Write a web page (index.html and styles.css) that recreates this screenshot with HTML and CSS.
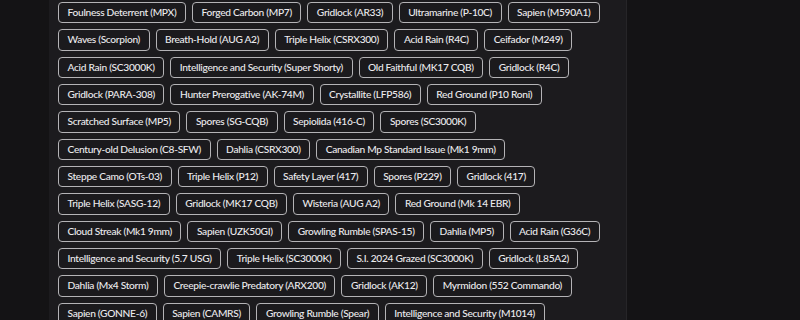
FILE: index.html
```html
<!DOCTYPE html>
<html lang="en">
<head>
  <meta charset="UTF-8" />
  <title>Camos</title>
  <link rel="stylesheet" href="styles.css">
</head>
<body>
<section class="side"></section>
<section class="panel">
  <div class="tags">
    <span class="tag">Foulness Deterrent (MPX)</span>
    <span class="tag">Forged Carbon (MP7)</span>
    <span class="tag">Gridlock (AR33)</span>
    <span class="tag">Ultramarine (P-10C)</span>
    <span class="tag">Sapien (M590A1)</span>
    <span class="tag">Waves (Scorpion)</span>
    <span class="tag">Breath-Hold (AUG A2)</span>
    <span class="tag">Triple Helix (CSRX300)</span>
    <span class="tag">Acid Rain (R4C)</span>
    <span class="tag">Ceifador (M249)</span>
    <span class="tag">Acid Rain (SC3000K)</span>
    <span class="tag">Intelligence and Security (Super Shorty)</span>
    <span class="tag">Old Faithful (MK17 CQB)</span>
    <span class="tag">Gridlock (R4C)</span>
    <span class="tag">Gridlock (PARA-308)</span>
    <span class="tag">Hunter Prerogative (AK-74M)</span>
    <span class="tag">Crystallite (LFP586)</span>
    <span class="tag">Red Ground (P10 Roni)</span>
    <span class="tag">Scratched Surface (MP5)</span>
    <span class="tag">Spores (SG-CQB)</span>
    <span class="tag">Sepiolida (416-C)</span>
    <span class="tag">Spores (SC3000K)</span>
    <span class="tag">Century-old Delusion (C8-SFW)</span>
    <span class="tag">Dahlia (CSRX300)</span>
    <span class="tag">Canadian Mp Standard Issue (Mk1 9mm)</span>
    <span class="tag">Steppe Camo (OTs-03)</span>
    <span class="tag">Triple Helix (P12)</span>
    <span class="tag">Safety Layer (417)</span>
    <span class="tag">Spores (P229)</span>
    <span class="tag">Gridlock (417)</span>
    <span class="tag">Triple Helix (SASG-12)</span>
    <span class="tag">Gridlock (MK17 CQB)</span>
    <span class="tag">Wisteria (AUG A2)</span>
    <span class="tag">Red Ground (Mk 14 EBR)</span>
    <span class="tag">Cloud Streak (Mk1 9mm)</span>
    <span class="tag">Sapien (UZK50GI)</span>
    <span class="tag">Growling Rumble (SPAS-15)</span>
    <span class="tag">Dahlia (MP5)</span>
    <span class="tag">Acid Rain (G36C)</span>
    <span class="tag">Intelligence and Security (5.7 USG)</span>
    <span class="tag">Triple Helix (SC3000K)</span>
    <span class="tag">S.I. 2024 Grazed (SC3000K)</span>
    <span class="tag">Gridlock (L85A2)</span>
    <span class="tag">Dahlia (Mx4 Storm)</span>
    <span class="tag">Creepie-crawlie Predatory (ARX200)</span>
    <span class="tag">Gridlock (AK12)</span>
    <span class="tag">Myrmidon (552 Commando)</span>
    <span class="tag">Sapien (GONNE-6)</span>
    <span class="tag">Sapien (CAMRS)</span>
    <span class="tag">Growling Rumble (Spear)</span>
    <span class="tag">Intelligence and Security (M1014)</span>
  </div>
</section>
<section class="side"></section>
</body>
</html>
```
FILE: styles.css
```css
body {
  background-color: #141315;
  margin: 0;
  height: 320px;
  overflow: hidden;
  display: flex;
  font-family: "Lato", "Noto Sans", sans-serif;
}
.side {
  width: 49px;
}
.panel {
  width: 578px;
  background-color: #1c1b1e;
  border-right: 1px solid #262528;
  padding: 2px 10px 0 9px;
  box-sizing: border-box;
}
.tags {
  display: flex;
  flex-wrap: wrap;
  gap: 6px;
}
.tag {
  border: 1px solid #b4b3b6;
  border-radius: 4px;
  padding: 3px 8.5px;
  line-height: 13.33px;
  font-size: 10.2px;
  font-weight: 500;
  letter-spacing: -0.3px;
  color: #ecebee;
  background-color: #1b1a1d;
}
```
